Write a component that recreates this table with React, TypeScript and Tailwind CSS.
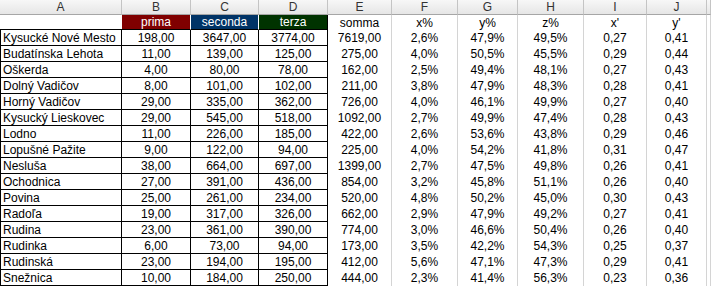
const rows: string[][] = [
  ["Kysucké Nové Mesto", "198,00", "3647,00", "3774,00", "7619,00", "2,6%", "47,9%", "49,5%", "0,27", "0,41"],
  ["Budatínska Lehota", "11,00", "139,00", "125,00", "275,00", "4,0%", "50,5%", "45,5%", "0,29", "0,44"],
  ["Oškerda", "4,00", "80,00", "78,00", "162,00", "2,5%", "49,4%", "48,1%", "0,27", "0,43"],
  ["Dolný Vadičov", "8,00", "101,00", "102,00", "211,00", "3,8%", "47,9%", "48,3%", "0,28", "0,41"],
  ["Horný Vadičov", "29,00", "335,00", "362,00", "726,00", "4,0%", "46,1%", "49,9%", "0,27", "0,40"],
  ["Kysucký Lieskovec", "29,00", "545,00", "518,00", "1092,00", "2,7%", "49,9%", "47,4%", "0,28", "0,43"],
  ["Lodno", "11,00", "226,00", "185,00", "422,00", "2,6%", "53,6%", "43,8%", "0,29", "0,46"],
  ["Lopušné Pažite", "9,00", "122,00", "94,00", "225,00", "4,0%", "54,2%", "41,8%", "0,31", "0,47"],
  ["Nesluša", "38,00", "664,00", "697,00", "1399,00", "2,7%", "47,5%", "49,8%", "0,26", "0,41"],
  ["Ochodnica", "27,00", "391,00", "436,00", "854,00", "3,2%", "45,8%", "51,1%", "0,26", "0,40"],
  ["Povina", "25,00", "261,00", "234,00", "520,00", "4,8%", "50,2%", "45,0%", "0,30", "0,43"],
  ["Radoľa", "19,00", "317,00", "326,00", "662,00", "2,9%", "47,9%", "49,2%", "0,27", "0,41"],
  ["Rudina", "23,00", "361,00", "390,00", "774,00", "3,0%", "46,6%", "50,4%", "0,26", "0,40"],
  ["Rudinka", "6,00", "73,00", "94,00", "173,00", "3,5%", "42,2%", "54,3%", "0,25", "0,37"],
  ["Rudinská", "23,00", "194,00", "195,00", "412,00", "5,6%", "47,1%", "47,3%", "0,29", "0,41"],
  ["Snežnica", "10,00", "184,00", "250,00", "444,00", "2,3%", "41,4%", "56,3%", "0,23", "0,36"],
];

const letters = ["A", "B", "C", "D", "E", "F", "G", "H", "I", "J", ""];

// widths match the column grid of the sheet
const grid =
  "grid grid-cols-[122px_69px_68px_69px_64px_66px_60px_66px_63px_60px_1fr]";

export default function App() {
  return (
    <div className="h-[286px] w-[711px] overflow-hidden bg-white font-['Liberation_Sans',Arial,sans-serif] text-[12px] text-black">
      {/* column letters */}
      <div className={`${grid} h-[15px]`}>
        {letters.map((l, i) => (
          <div
            key={i}
            className="flex items-center justify-center border-r border-b border-r-[#c4c4c4] border-b-[#a6a6a6] bg-gradient-to-b from-[#f7f7f7] to-[#e6e6e6] leading-none text-[#333]"
          >
            {l}
          </div>
        ))}
      </div>

      {/* title row */}
      <div className={`${grid} h-[15px] leading-none`}>
        <div className="border-b border-black" />
        <div className="flex items-center justify-center border-r border-b border-r-white border-b-black bg-[#800000] text-white">
          prima
        </div>
        <div className="flex items-center justify-center border-r border-b border-r-white border-b-black bg-[#003366] text-white">
          seconda
        </div>
        <div className="flex items-center justify-center border-r border-b border-r-black border-b-black bg-[#003300] text-white">
          terza
        </div>
        {["somma", "x%", "y%", "z%", "x'", "y'", ""].map((t, i) => (
          <div
            key={i}
            className="flex items-center justify-center border-r border-[#d4d4d4]"
          >
            {t}
          </div>
        ))}
      </div>

      {rows.map((r) => (
        <div key={r[0]} className={`${grid} h-[16px] leading-none`}>
          <div className="flex items-center border-r border-b border-l border-black pl-[2px]">
            {r[0]}
          </div>
          {r.slice(1, 4).map((v, i) => (
            <div
              key={i}
              className="flex items-center justify-center border-r border-b border-black"
            >
              {v}
            </div>
          ))}
          {r.slice(4).map((v, i) => (
            <div
              key={i}
              className="flex items-center justify-center border-r border-[#d4d4d4]"
            >
              {v}
            </div>
          ))}
          <div className="border-r border-[#d4d4d4]" />
        </div>
      ))}
    </div>
  );
}
